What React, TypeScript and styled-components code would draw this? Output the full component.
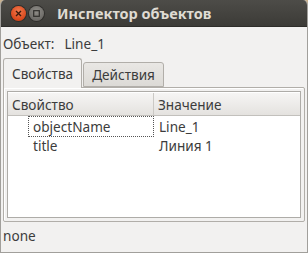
import * as React from 'react'
import styled, {createGlobalStyle} from 'styled-components'

const GlobalStyle = createGlobalStyle`
  html, body {
    margin: 0;
    padding: 0;
    background: #c9b28f;
  }
  * {
    box-sizing: border-box;
  }
`

const font = `"Noto Sans", "DejaVu Sans", sans-serif`

const Window = styled.div`
  width: 308px;
  height: 253px;
  display: flex;
  flex-direction: column;
  background: #f2f1f0;
  border: 1px solid #a19f9b;
  border-top: none;
  border-top-right-radius: 5px;
  border-top-left-radius: 5px;
  overflow: hidden;
  font-family: ${font};
  font-size: 13.6px;
  color: #3c3c3c;
`

const TitleBar = styled.div`
  height: 27px;
  flex: none;
  display: flex;
  align-items: center;
  padding-left: 11px;
  margin: 0 -1px;
  background: linear-gradient(#4d4c48, #3c3b37);
  border-bottom: 1px solid #2e2d2a;
`

const WinButton = styled.div<{$kind: 'close' | 'min'}>`
  width: 15px;
  height: 15px;
  border-radius: 50%;
  margin-right: 3px;
  display: flex;
  align-items: center;
  justify-content: center;
  background: ${p => p.$kind === 'close'
    ? 'radial-gradient(circle at 50% 35%, #f37a4e, #d9471b 70%, #b83a12)'
    : 'radial-gradient(circle at 50% 35%, #8f8d88, #6d6b67 70%, #5b5955)'};
  box-shadow: 0 0 0 1px #2f2e2b;
`

const Title = styled.div`
  margin-left: 10px;
  font-weight: bold;
  font-size: 14.5px;
  color: #dfdbd2;
`

const ObjectRow = styled.div`
  height: 31px;
  display: flex;
  align-items: center;
  padding: 2px 2px 0;
  gap: 10px;
`

const TabBar = styled.div`
  display: flex;
  align-items: flex-end;
  height: 29px;
  padding-left: 2px;
  position: relative;
  z-index: 1;
`

const Tab = styled.div<{$active?: boolean}>`
  height: ${p => p.$active ? '30px' : '25px'};
  margin-bottom: ${p => p.$active ? '-1px' : '0'};
  padding: 0 8px;
  display: flex;
  align-items: center;
  border: 1px solid #b1aea9;
  border-bottom: ${p => p.$active ? 'none' : '1px solid #b1aea9'};
  border-radius: 3px 3px 0 0;
  background: ${p => p.$active ? '#f2f1f0' : 'linear-gradient(#e9e7e4, #dcdad6)'};
  color: #3c3c3c;
  margin-right: 1px;
`

const Panel = styled.div`
  height: 135px;
  margin: 0 2px;
  padding: 3px;
  border: 1px solid #b1aea9;
  box-shadow: inset 1px 1px 0 #fff;
  border-radius: 0 2px 2px 2px;
`

const Tree = styled.div`
  height: 100%;
  background: #fff;
  border: 1px solid #aeaca8;
  display: flex;
  flex-direction: column;
`

const Header = styled.div`
  display: grid;
  grid-template-columns: 146px 1fr;
  height: 24px;
  background: linear-gradient(#f6f5f4, #e4e2df);
  border-top: 1px solid #fff;
  border-bottom: 1px solid #c2c0bc;
`

const HeaderCell = styled.div<{$last?: boolean}>`
  display: flex;
  align-items: center;
  padding-left: 4px;
  border-right: ${p => p.$last ? 'none' : '1px solid #cbc9c5'};
`

const Row = styled.div`
  display: grid;
  grid-template-columns: 146px 1fr;
  height: 19px;
`

const NameCell = styled.div<{$focused?: boolean}>`
  margin-left: 20px;
  padding-left: 4px;
  display: flex;
  align-items: center;
  border: 1px dotted ${p => p.$focused ? '#555' : 'transparent'};
`

const ValueCell = styled.div`
  display: flex;
  align-items: center;
  padding-left: 5px;
`

const Status = styled.div`
  flex: 1;
  display: flex;
  align-items: center;
  padding-left: 2px;
  padding-bottom: 3px;
`

const rows = [
  {name: 'objectName', value: 'Line_1', focused: true},
  {name: 'title', value: 'Линия 1'},
]

export default function App() {
  return (
    <Window>
      <GlobalStyle />
      <TitleBar>
        <WinButton $kind="close">
          <svg width="7" height="7" viewBox="0 0 7 7">
            <path d="M1 1L6 6M6 1L1 6" stroke="#3a1a0c" strokeWidth="1.4" />
          </svg>
        </WinButton>
        <WinButton $kind="min">
          <svg width="7" height="7" viewBox="0 0 7 7">
            <rect x="0.7" y="0.7" width="5.6" height="5.6" fill="none" stroke="#2f2e2b" strokeWidth="1.2" />
          </svg>
        </WinButton>
        <Title>Инспектор объектов</Title>
      </TitleBar>
      <ObjectRow>
        <span>Объект:</span>
        <span>Line_1</span>
      </ObjectRow>
      <TabBar>
        <Tab $active>Свойства</Tab>
        <Tab>Действия</Tab>
      </TabBar>
      <Panel>
        <Tree>
          <Header>
            <HeaderCell>Свойство</HeaderCell>
            <HeaderCell $last>Значение</HeaderCell>
          </Header>
          {rows.map(r => (
            <Row key={r.name}>
              <NameCell $focused={r.focused}>{r.name}</NameCell>
              <ValueCell>{r.value}</ValueCell>
            </Row>
          ))}
        </Tree>
      </Panel>
      <Status>none</Status>
    </Window>
  )
}
